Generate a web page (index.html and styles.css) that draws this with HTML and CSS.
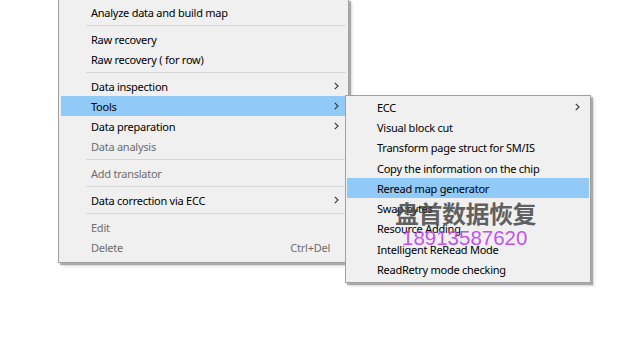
FILE: index.html
```html
<!DOCTYPE html>
<html lang="en">
<head>
<meta charset="UTF-8">
<title>Context menu - Tools</title>
<link rel="stylesheet" href="styles.css">
</head>
<body>
<div class="desktop">
    <ul class="menu main-menu">
        <li class="item">Analyze data and build map</li>
        <li class="sep"></li>
        <li class="item">Raw recovery</li>
        <li class="item">Raw recovery ( for row)</li>
        <li class="sep"></li>
        <li class="item">Data inspection<span class="arrow"><svg width="5" height="8" viewBox="0 0 5 8"><polyline points="0.8,0.8 4,4 0.8,7.2" fill="none" stroke="#333" stroke-width="1.1"/></svg></span></li>
        <li class="item active">Tools<span class="arrow"><svg width="5" height="8" viewBox="0 0 5 8"><polyline points="0.8,0.8 4,4 0.8,7.2" fill="none" stroke="#333" stroke-width="1.1"/></svg></span></li>
        <li class="item">Data preparation<span class="arrow"><svg width="5" height="8" viewBox="0 0 5 8"><polyline points="0.8,0.8 4,4 0.8,7.2" fill="none" stroke="#333" stroke-width="1.1"/></svg></span></li>
        <li class="item disabled">Data analysis</li>
        <li class="sep"></li>
        <li class="item disabled">Add translator</li>
        <li class="sep"></li>
        <li class="item">Data correction via ECC<span class="arrow"><svg width="5" height="8" viewBox="0 0 5 8"><polyline points="0.8,0.8 4,4 0.8,7.2" fill="none" stroke="#333" stroke-width="1.1"/></svg></span></li>
        <li class="sep"></li>
        <li class="item disabled">Edit</li>
        <li class="item disabled">Delete<span class="shortcut">Ctrl+Del</span></li>
    </ul>

    <ul class="menu sub-menu">
        <li class="item">ECC<span class="arrow"><svg width="5" height="8" viewBox="0 0 5 8"><polyline points="0.8,0.8 4,4 0.8,7.2" fill="none" stroke="#333" stroke-width="1.1"/></svg></span></li>
        <li class="item">Visual block cut</li>
        <li class="item">Transform page struct for SM/IS</li>
        <li class="item">Copy the information on the chip</li>
        <li class="item active">Reread map generator</li>
        <li class="item">Swap bytes</li>
        <li class="item">Resource Adding</li>
        <li class="item">Intelligent ReRead Mode</li>
        <li class="item">ReadRetry mode checking</li>
    </ul>

    <div class="watermark">
        <div class="wm-name">盘首数据恢复</div>
        <div class="wm-phone">18913587620</div>
    </div>
</div>
</body>
</html>
```

FILE: styles.css
```css
body {
    margin: 0;
    background: #ffffff;
    font-family: "Noto Sans", "Open Sans", sans-serif;
    font-size: 11px;
    letter-spacing: -0.25px;
    color: #000;
}
.desktop {
    position: relative;
    width: 640px;
    height: 353px;
    overflow: hidden;
    padding-left: 58px;
    box-sizing: border-box;
}
.menu {
    list-style: none;
    margin: 0;
    background: #f0f0f0;
    border: 1px solid #a0a0a0;
    box-shadow: 2px 2px 1px rgba(0, 0, 0, 0.28), 4px 4px 2px rgba(0, 0, 0, 0.08);
    box-sizing: border-box;
}
.main-menu {
    width: 291px;
    margin-top: -1px;
    padding: 3px 2px 5px 2px;
    border-top: none;
}
.sub-menu {
    position: absolute;
    left: 345px;
    top: 95px;
    width: 246px;
    padding: 1px 1px 2px 1px;
}
.item {
    display: flex;
    align-items: center;
    height: 20px;
    padding-left: 30px;
    padding-right: 7px;
    white-space: nowrap;
}
.sub-menu .item {
    height: 20.3px;
    padding-left: 30px;
    padding-right: 9px;
}
.item.active {
    background: #91c9f7;
}
.item.disabled {
    color: #6d6d6d;
}
.shortcut {
    margin-left: auto;
    margin-right: 9px;
}
.arrow {
    margin-left: auto;
    display: flex;
    align-items: center;
}
.sep {
    height: 7px;
    position: relative;
}
.sep::after {
    content: "";
    position: absolute;
    left: 25px;
    right: 0;
    top: 3px;
    height: 1px;
    background: #d7d7d7;
}
.watermark {
    position: absolute;
    left: 395px;
    top: 199px;
    pointer-events: none;
}
.wm-name {
    font-family: "Noto Sans CJK SC", sans-serif;
    font-weight: bold;
    font-size: 24px;
    line-height: 28px;
    color: rgba(70, 70, 70, 0.85);
    letter-spacing: -0.5px;
}
.wm-phone {
    font-family: "Liberation Sans", sans-serif;
    font-size: 20.5px;
    line-height: 22px;
    letter-spacing: 0;
    color: rgba(190, 60, 240, 0.9);
    margin-left: 7px;
}
```
